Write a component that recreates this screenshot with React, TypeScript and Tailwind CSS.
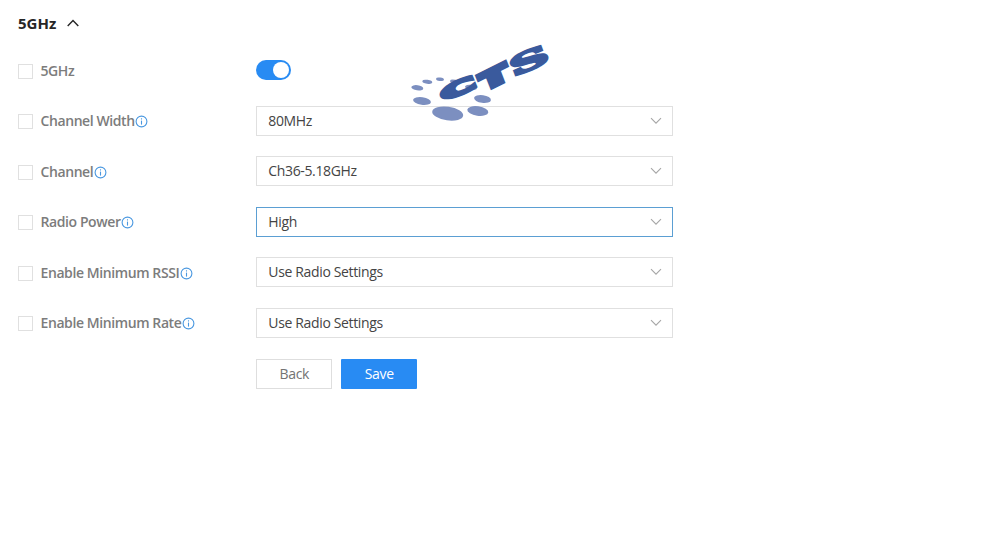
import React from "react";

const SANS = "font-['Open_Sans','Noto_Sans',sans-serif]";

function InfoIcon() {
  return (
    <svg width="13" height="13" viewBox="0 0 13 13" fill="none" className="ml-[0.5px] mt-px shrink-0">
      <circle cx="6.5" cy="6.5" r="5.4" stroke="#4a98e0" strokeWidth="1.1" />
      <path d="M6.5 5.6v4" stroke="#4a98e0" strokeWidth="1.1" />
      <path d="M6.5 3.3v1.2" stroke="#4a98e0" strokeWidth="1.1" />
    </svg>
  );
}

function FieldLabel({ text, info = true }: { text: string; info?: boolean }) {
  return (
    <div className="flex w-[238.3px] shrink-0 items-center pt-px">
      <span className="mt-px size-[15px] shrink-0 border border-[#e0e0e0] bg-white" />
      <span className="ml-[7.5px] whitespace-nowrap text-[14px] font-semibold leading-5 tracking-[-0.41px] text-[#7c7c7c]">
        {text}
      </span>
      {info && <InfoIcon />}
    </div>
  );
}

function Select({ value, focused = false }: { value: string; focused?: boolean }) {
  return (
    <div
      className={`flex h-[30px] w-[417px] items-center justify-between border bg-white pl-[11px] pr-[10px] ${
        focused ? "border-[#5b9fd3]" : "border-[#e0e0e0]"
      }`}
    >
      <span className="text-[14px] leading-5 tracking-[-0.35px] text-[#444]">{value}</span>
      <svg width="12" height="8" viewBox="0 0 12 8" fill="none">
        <path d="M1 1.2 6 6.2l5-5" stroke="#a6a6a6" strokeWidth="1.1" />
      </svg>
    </div>
  );
}

function Logo() {
  return (
    <svg className="absolute left-[400px] top-[35px]" width="170" height="100" viewBox="400 35 170 100">
      <g fill="#7c8fc0">
        <ellipse cx="447.7" cy="113.6" rx="15.6" ry="6.8" transform="rotate(8 447.7 113.6)" />
        <ellipse cx="477.8" cy="111" rx="10.6" ry="4.7" transform="rotate(8 477.8 111)" />
        <ellipse cx="482.5" cy="99" rx="8.5" ry="3.9" transform="rotate(8 482.5 99)" />
        <ellipse cx="422" cy="101" rx="9" ry="3.9" transform="rotate(8 422 101)" />
        <ellipse cx="417.3" cy="87.8" rx="6" ry="2.6" transform="rotate(8 417.3 87.8)" />
        <ellipse cx="427.3" cy="81.8" rx="5" ry="2" transform="rotate(8 427.3 81.8)" />
        <ellipse cx="440" cy="79.3" rx="4" ry="1.7" transform="rotate(8 440 79.3)" />
        <ellipse cx="455" cy="81.8" rx="5" ry="2" transform="rotate(12 455 81.8)" />
        <ellipse cx="471" cy="87.4" rx="6" ry="2.6" transform="rotate(8 471 87.4)" />
      </g>
      <g
        fill="#3a5a9d"
        stroke="#3a5a9d"
        fontSize="10"
        className="font-['DejaVu_Sans',sans-serif] font-bold"
      >
        <text strokeWidth="1.6" transform="matrix(4.5 -1.95 0.7 1.7 443.8 101.8)">C</text>
        <text strokeWidth="2.3" transform="matrix(3.5 -1.75 0.8 2.05 485.2 90.2)">T</text>
        <text strokeWidth="1" className="font-['DejaVu_Serif',serif]" transform="matrix(5.1 -2.2 0.9 2.4 513.8 77)">
          S
        </text>
      </g>
    </svg>
  );
}

const fields = [
  { label: "Channel Width", value: "80MHz" },
  { label: "Channel", value: "Ch36-5.18GHz" },
  { label: "Radio Power", value: "High", focused: true },
  { label: "Enable Minimum RSSI", value: "Use Radio Settings" },
  { label: "Enable Minimum Rate", value: "Use Radio Settings" },
];

export default function App() {
  return (
    <main className={`relative h-[557px] w-[991px] overflow-hidden bg-white pl-[18px] pt-[12px] ${SANS}`}>
      <h2 className="flex h-[22px] items-center text-[15px] font-bold text-[#262626]">
        5GHz
        <svg className="ml-[11px]" width="12" height="8" viewBox="0 0 12 8" fill="none">
          <path d="M.7 7 6 1.5 11.3 7" stroke="#262626" strokeWidth="1.4" />
        </svg>
      </h2>
      <div className="mt-[21.4px] flex flex-col gap-[20.5px]">
        <div className="flex h-[30px] items-center">
          <FieldLabel text="5GHz" info={false} />
          <span className="flex h-5 w-[34.4px] items-center justify-end rounded-full bg-[#288bf3] pr-[2px]">
            <span className="size-4 rounded-full bg-white" />
          </span>
        </div>
        {fields.map((f) => (
          <div key={f.label} className="flex h-[30px] items-center">
            <FieldLabel text={f.label} />
            <Select value={f.value} focused={f.focused} />
          </div>
        ))}
        <div className="ml-[238.3px] flex gap-[9px] pt-[0.3px] text-[14px] leading-5 tracking-[-0.3px]">
          <button className="h-[30px] w-[76px] border border-[#dedede] bg-white text-[#737373]">Back</button>
          <button className="h-[30px] w-[76px] rounded-[1px] bg-[#288bf3] font-medium text-white">Save</button>
        </div>
      </div>
      <Logo />
    </main>
  );
}
